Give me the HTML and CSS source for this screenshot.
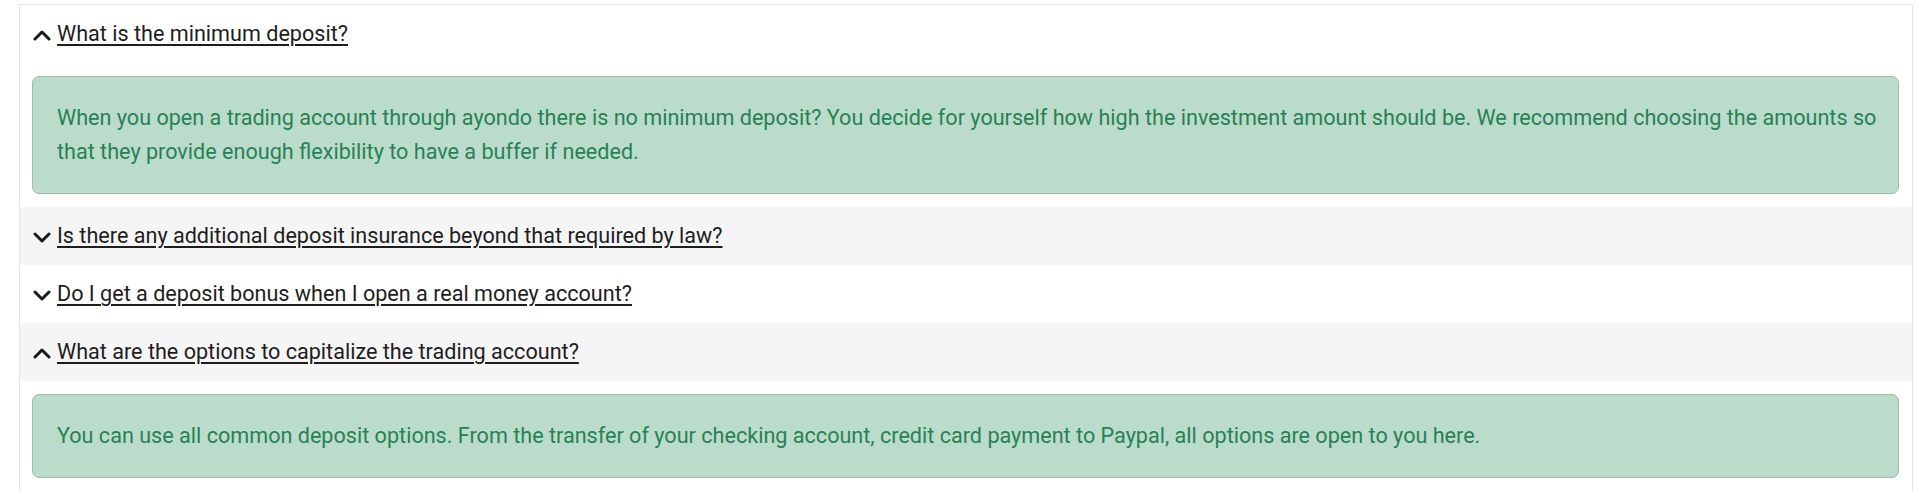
FILE: index.html
```html
<!DOCTYPE html>
<html lang="en">
<head>
<meta charset="utf-8">
<title>FAQ</title>
<link rel="stylesheet" href="styles.css">
</head>
<body>
<div class="faq">
  <div class="item open">
    <div class="head">
      <svg class="chev" viewBox="0 0 18 12" width="18" height="12"><path d="M2 10 L9 3 L16 10" /></svg>
      <a href="#" class="q">What is the minimum deposit?</a>
    </div>
    <div class="panel">
      <div class="alert">When you open a trading account through ayondo there is no minimum deposit? You decide for yourself how high the investment amount should be. We recommend choosing the amounts so that they provide enough flexibility to have a buffer if needed.</div>
    </div>
  </div>
  <div class="item alt">
    <div class="head">
      <svg class="chev" viewBox="0 0 18 12" width="18" height="12"><path d="M2 3 L9 10 L16 3" /></svg>
      <a href="#" class="q">Is there any additional deposit insurance beyond that required by law?</a>
    </div>
  </div>
  <div class="item">
    <div class="head">
      <svg class="chev" viewBox="0 0 18 12" width="18" height="12"><path d="M2 3 L9 10 L16 3" /></svg>
      <a href="#" class="q">Do I get a deposit bonus when I open a real money account?</a>
    </div>
  </div>
  <div class="item alt open">
    <div class="head">
      <svg class="chev" viewBox="0 0 18 12" width="18" height="12"><path d="M2 10 L9 3 L16 10" /></svg>
      <a href="#" class="q">What are the options to capitalize the trading account?</a>
    </div>
    <div class="panel">
      <div class="alert">You can use all common deposit options. From the transfer of your checking account, credit card payment to Paypal, all options are open to you here.</div>
    </div>
  </div>
</div>
</body>
</html>
```
FILE: styles.css
```css
html, body {
  margin: 0;
  padding: 0;
  background: #ffffff;
}
body {
  font-family: Roboto, "Liberation Sans", Arial, sans-serif;
  padding: 4px 6px 0 19px;
}
.faq {
  border: 1px solid #e6e6e6;
  border-bottom: none;
  background: #ffffff;
}
.item.alt > .head {
  background: #f5f5f5;
}
.head {
  display: flex;
  align-items: center;
  height: 58px;
  padding-left: 13px;
  box-sizing: border-box;
}
.chev {
  flex: none;
  margin-right: 6px;
  margin-top: 1px;
}
.chev path {
  fill: none;
  stroke: #1a1a1a;
  stroke-width: 3;
  stroke-linecap: round;
  stroke-linejoin: round;
}
.q {
  color: #1e1e1e;
  font-size: 21.6px;
  line-height: 26px;
  text-decoration: underline;
  text-underline-offset: 3px;
  text-decoration-thickness: 1.5px;
}
.panel {
  padding: 13px 13px 13px 12px;
  background: #ffffff;
}
.alert {
  background: #bcdccb;
  border: 1px solid #9fbcab;
  border-radius: 7px;
  color: #268255;
  font-size: 21.6px;
  line-height: 34px;
  padding: 24px 16px 24px 24px;
}
```
